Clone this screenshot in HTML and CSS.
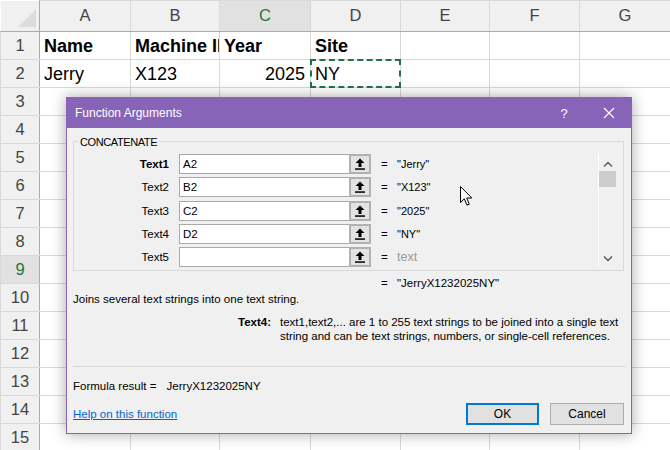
FILE: index.html
```html
<!DOCTYPE html>
<html lang="en">
<head>
    <meta charset="UTF-8">
    <title>Function Arguments</title>
    <link rel="stylesheet" href="styles.css">
</head>
<body>
<div class="sheet">
    <table class="grid">
        <colgroup>
            <col class="w-hdr"><col class="w-91"><col class="w-89"><col class="w-91"><col class="w-90"><col class="w-89"><col class="w-90"><col class="w-91">
        </colgroup>
        <tr class="head">
            <th class="corner"><svg width="39" height="30" viewBox="0 0 39 30"><polygon points="35,8 35,26 17,26" fill="#dcdcdc"/></svg></th>
            <th>A</th><th>B</th><th class="sel-col">C</th><th>D</th><th>E</th><th>F</th><th>G</th>
        </tr>
        <tr><th>1</th><td class="b">Name</td><td class="b">Machine ID</td><td class="b">Year</td><td class="b">Site</td><td></td><td></td><td></td></tr>
        <tr><th>2</th><td>Jerry</td><td>X123</td><td class="num">2025</td><td class="ants">NY</td><td></td><td></td><td></td></tr>
        <tr><th>3</th><td></td><td></td><td></td><td></td><td></td><td></td><td></td></tr>
        <tr><th>4</th><td></td><td></td><td></td><td></td><td></td><td></td><td></td></tr>
        <tr><th>5</th><td></td><td></td><td></td><td></td><td></td><td></td><td></td></tr>
        <tr><th>6</th><td></td><td></td><td></td><td></td><td></td><td></td><td></td></tr>
        <tr><th>7</th><td></td><td></td><td></td><td></td><td></td><td></td><td></td></tr>
        <tr><th>8</th><td></td><td></td><td></td><td></td><td></td><td></td><td></td></tr>
        <tr><th class="sel-row">9</th><td></td><td></td><td></td><td></td><td></td><td></td><td></td></tr>
        <tr><th>10</th><td></td><td></td><td></td><td></td><td></td><td></td><td></td></tr>
        <tr><th>11</th><td></td><td></td><td></td><td></td><td></td><td></td><td></td></tr>
        <tr><th>12</th><td></td><td></td><td></td><td></td><td></td><td></td><td></td></tr>
        <tr><th>13</th><td></td><td></td><td></td><td></td><td></td><td></td><td></td></tr>
        <tr><th>14</th><td></td><td></td><td></td><td></td><td></td><td></td><td></td></tr>
        <tr><th>15</th><td></td><td></td><td></td><td></td><td></td><td></td><td></td></tr>
    </table>

    <div class="dialog">
        <div class="titlebar">
            <span class="title">Function Arguments</span>
            <span class="help">?</span>
            <span class="close"><svg width="12" height="12" viewBox="0 0 12 12"><path d="M1 1 L11 11 M11 1 L1 11" stroke="#fff" stroke-width="1.2"/></svg></span>
        </div>
        <div class="dlg-body">
            <div class="group">
                <div class="group-name">CONCATENATE</div>
                <div class="group-inner">
                    <div class="args">
                        <label class="arg-name b">Text1</label>
                        <div class="field">A2</div>
                        <div class="pick"><svg width="10" height="12" viewBox="0 0 10 12"><path d="M5 0.5 L9.5 5 L6.5 5 L6.5 9 L3.5 9 L3.5 5 L0.5 5 Z" fill="#000"/><rect x="0" y="10.3" width="10" height="1.5" fill="#000"/></svg></div>
                        <span class="eq">=</span>
                        <span class="val">"Jerry"</span>

                        <label class="arg-name">Text2</label>
                        <div class="field">B2</div>
                        <div class="pick"><svg width="10" height="12" viewBox="0 0 10 12"><path d="M5 0.5 L9.5 5 L6.5 5 L6.5 9 L3.5 9 L3.5 5 L0.5 5 Z" fill="#000"/><rect x="0" y="10.3" width="10" height="1.5" fill="#000"/></svg></div>
                        <span class="eq">=</span>
                        <span class="val">"X123"</span>

                        <label class="arg-name">Text3</label>
                        <div class="field">C2</div>
                        <div class="pick"><svg width="10" height="12" viewBox="0 0 10 12"><path d="M5 0.5 L9.5 5 L6.5 5 L6.5 9 L3.5 9 L3.5 5 L0.5 5 Z" fill="#000"/><rect x="0" y="10.3" width="10" height="1.5" fill="#000"/></svg></div>
                        <span class="eq">=</span>
                        <span class="val">"2025"</span>

                        <label class="arg-name">Text4</label>
                        <div class="field">D2</div>
                        <div class="pick"><svg width="10" height="12" viewBox="0 0 10 12"><path d="M5 0.5 L9.5 5 L6.5 5 L6.5 9 L3.5 9 L3.5 5 L0.5 5 Z" fill="#000"/><rect x="0" y="10.3" width="10" height="1.5" fill="#000"/></svg></div>
                        <span class="eq">=</span>
                        <span class="val">"NY"</span>

                        <label class="arg-name">Text5</label>
                        <div class="field"></div>
                        <div class="pick"><svg width="10" height="12" viewBox="0 0 10 12"><path d="M5 0.5 L9.5 5 L6.5 5 L6.5 9 L3.5 9 L3.5 5 L0.5 5 Z" fill="#000"/><rect x="0" y="10.3" width="10" height="1.5" fill="#000"/></svg></div>
                        <span class="eq">=</span>
                        <span class="val hint">text</span>
                    </div>
                    <div class="scroll">
                        <svg class="chev" width="10" height="7" viewBox="0 0 10 7"><polyline points="1,5.5 5,1.5 9,5.5" fill="none" stroke="#555" stroke-width="1.4"/></svg>
                        <div class="thumb"></div>
                        <div class="track"></div>
                        <svg class="chev" width="10" height="7" viewBox="0 0 10 7"><polyline points="1,1.5 5,5.5 9,1.5" fill="none" stroke="#555" stroke-width="1.4"/></svg>
                    </div>
                </div>
            </div>

            <div class="result-line"><span class="eq-out">=</span>"JerryX1232025NY"</div>
            <p class="summary">Joins several text strings into one text string.</p>
            <div class="arg-help">
                <b class="arg-help-name">Text4:</b>
                <p class="arg-help-text">text1,text2,... are 1 to 255 text strings to be joined into a single text string and can be text strings, numbers, or single-cell references.</p>
            </div>
            <div class="sep"></div>
            <div class="formula">Formula result = <span class="formula-val">JerryX1232025NY</span></div>
            <div class="footer">
                <a class="help-link" href="#">Help on this function</a>
                <div class="buttons">
                    <button class="ok">OK</button>
                    <button class="cancel">Cancel</button>
                </div>
            </div>
        </div>
        <svg class="cursor" width="13" height="21" viewBox="0 0 13 21"><path d="M0.5 0.5 L0.5 16.5 L4.3 12.8 L7 19.2 L9.3 18.2 L6.7 12 L11.8 12 Z" fill="#fff" stroke="#000" stroke-width="1" stroke-linejoin="miter"/></svg>
    </div>
</div>
</body>
</html>
```

FILE: styles.css
```css
* {
    font-family: "Liberation Sans", Arial, Helvetica, sans-serif;
}
body {
    margin: 0;
    background: #fff;
    overflow: hidden;
}
.sheet {
    position: relative;
    width: 670px;
    height: 450px;
}

/* spreadsheet grid */
.grid {
    border-collapse: collapse;
    table-layout: fixed;
    width: 670px;
}
.w-hdr { width: 39px; }
.w-89 { width: 89px; }
.w-90 { width: 90px; }
.w-91 { width: 91px; }
.grid tr {
    height: 28px;
}
.grid tr.head {
    height: 30px;
}
.grid th, .grid td {
    border: 1px solid #d9d9d9;
    padding: 0;
    overflow: hidden;
    white-space: nowrap;
}
.grid th {
    background: #f0f0f0;
    color: #444;
    font-weight: normal;
    font-size: 16.5px;
    text-align: center;
}
.grid tr.head th {
    border-bottom: 1px solid #ababab;
}
.grid tr th:first-child {
    border-right: 1px solid #ababab;
}
.grid th.corner {
    padding: 0;
    line-height: 0;
    border-top: 0;
    border-left: 0;
}
.grid th.sel-col {
    background: #e1e1e1;
    color: #217346;
    border-bottom: 2px solid #217346;
}
.grid th.sel-row {
    background: #e1e1e1;
    color: #217346;
    border-right: 2px solid #217346;
}
.grid td {
    font-size: 18px;
    color: #000;
    padding: 2px 4px 0 4px;
}
.grid td.b {
    font-weight: bold;
}
.grid td.num {
    text-align: right;
    padding-right: 5px;
}
.grid td.ants {
    position: relative;
    overflow: visible;
}
.grid td.ants::after {
    content: "";
    position: absolute;
    left: -1px;
    top: -1px;
    right: -1px;
    bottom: -1px;
    border: 2px dashed #217346;
}

/* dialog */
.dialog {
    position: absolute;
    left: 66px;
    top: 97px;
    width: 566px;
    height: 337px;
    box-sizing: border-box;
    background: #f0f0f0;
    border: 1px solid #8764b8;
    box-shadow: 0 0 14px rgba(0, 0, 0, 0.35);
    font-size: 11.5px;
    color: #000;
}
.titlebar {
    height: 30px;
    background: #8764b8;
    color: #fff;
    display: flex;
    align-items: center;
    padding-left: 8px;
}
.title {
    font-size: 12px;
}
.help {
    margin-left: auto;
    width: 20px;
    text-align: center;
    font-size: 13px;
    margin-right: 12px;
}
.close {
    width: 45px;
    height: 30px;
    display: flex;
    align-items: center;
    justify-content: center;
}
.dlg-body {
    padding: 13px 7px 0 6px;
}
.group {
    border: 1px solid #dadada;
    padding-bottom: 3px;
}
.group-name {
    display: table;
    margin: -7px 0 0 4px;
    padding: 0 2px;
    background: #f0f0f0;
    line-height: 14px;
    font-size: 11px;
    letter-spacing: -0.4px;
}
.group-inner {
    display: flex;
    margin-top: 5px;
}
.args {
    display: grid;
    grid-template-columns: 105px 170px 22px 26px 180px;
    grid-auto-rows: 20px;
    row-gap: 3.33px;
    align-items: center;
}
.arg-name {
    text-align: right;
    padding-right: 10px;
}
.arg-name.b {
    font-weight: bold;
}
.field {
    height: 20px;
    box-sizing: border-box;
    border: 1px solid #a9a9a9;
    border-right: 0;
    background: #fff;
    padding-left: 3px;
    line-height: 18px;
}
.pick {
    height: 20px;
    box-sizing: border-box;
    border: 2px solid #b1b1b1;
    background: #e3e3e3;
    display: flex;
    align-items: center;
    justify-content: center;
}
.eq {
    padding-left: 10px;
}
.val {
    font-size: 11px;
}
.val.hint {
    color: #9a9a9a;
    font-size: 12.5px;
}
.scroll {
    margin-left: auto;
    margin-right: 7px;
    width: 18px;
    box-sizing: border-box;
    border-left: 1px solid #fff;
    display: flex;
    flex-direction: column;
    align-items: center;
    padding: 7px 0 5px 0;
}
.thumb {
    width: 17px;
    height: 16px;
    background: #cdcdcd;
    margin-top: 3px;
}
.track {
    flex: 1;
}
.result-line {
    margin-top: 4px;
    line-height: 16px;
    padding-left: 308px;
}
.eq-out {
    display: inline-block;
    width: 16px;
}
.summary {
    margin: 0;
    line-height: 16px;
}
.arg-help {
    display: flex;
    margin-top: 9px;
    line-height: 13.3px;
}
.arg-help-name {
    width: 198px;
    flex: none;
    text-align: right;
}
.arg-help-text {
    margin: 0 0 0 9px;
    width: 346px;
}
.sep {
    margin-top: 23px;
    border-top: 1px solid #d8d8d8;
    margin-right: -2px;
}
.formula {
    margin-top: 11px;
    line-height: 16px;
}
.formula-val {
    margin-left: 7px;
}
.footer {
    display: flex;
    align-items: center;
    margin-top: 9px;
    height: 22px;
}
.help-link {
    color: #0066cc;
    text-decoration: underline;
    font-size: 11.5px;
}
.buttons {
    margin-left: auto;
    display: flex;
    gap: 11px;
}
.buttons button {
    height: 22px;
    width: 74px;
    box-sizing: border-box;
    background: #e1e1e1;
    border: 1px solid #adadad;
    font-size: 12px;
    color: #000;
    padding: 0;
}
.buttons button.ok {
    width: 73px;
    border: 2px solid #0078d7;
}
.cursor {
    position: absolute;
    left: 393px;
    top: 88px;
}
```
